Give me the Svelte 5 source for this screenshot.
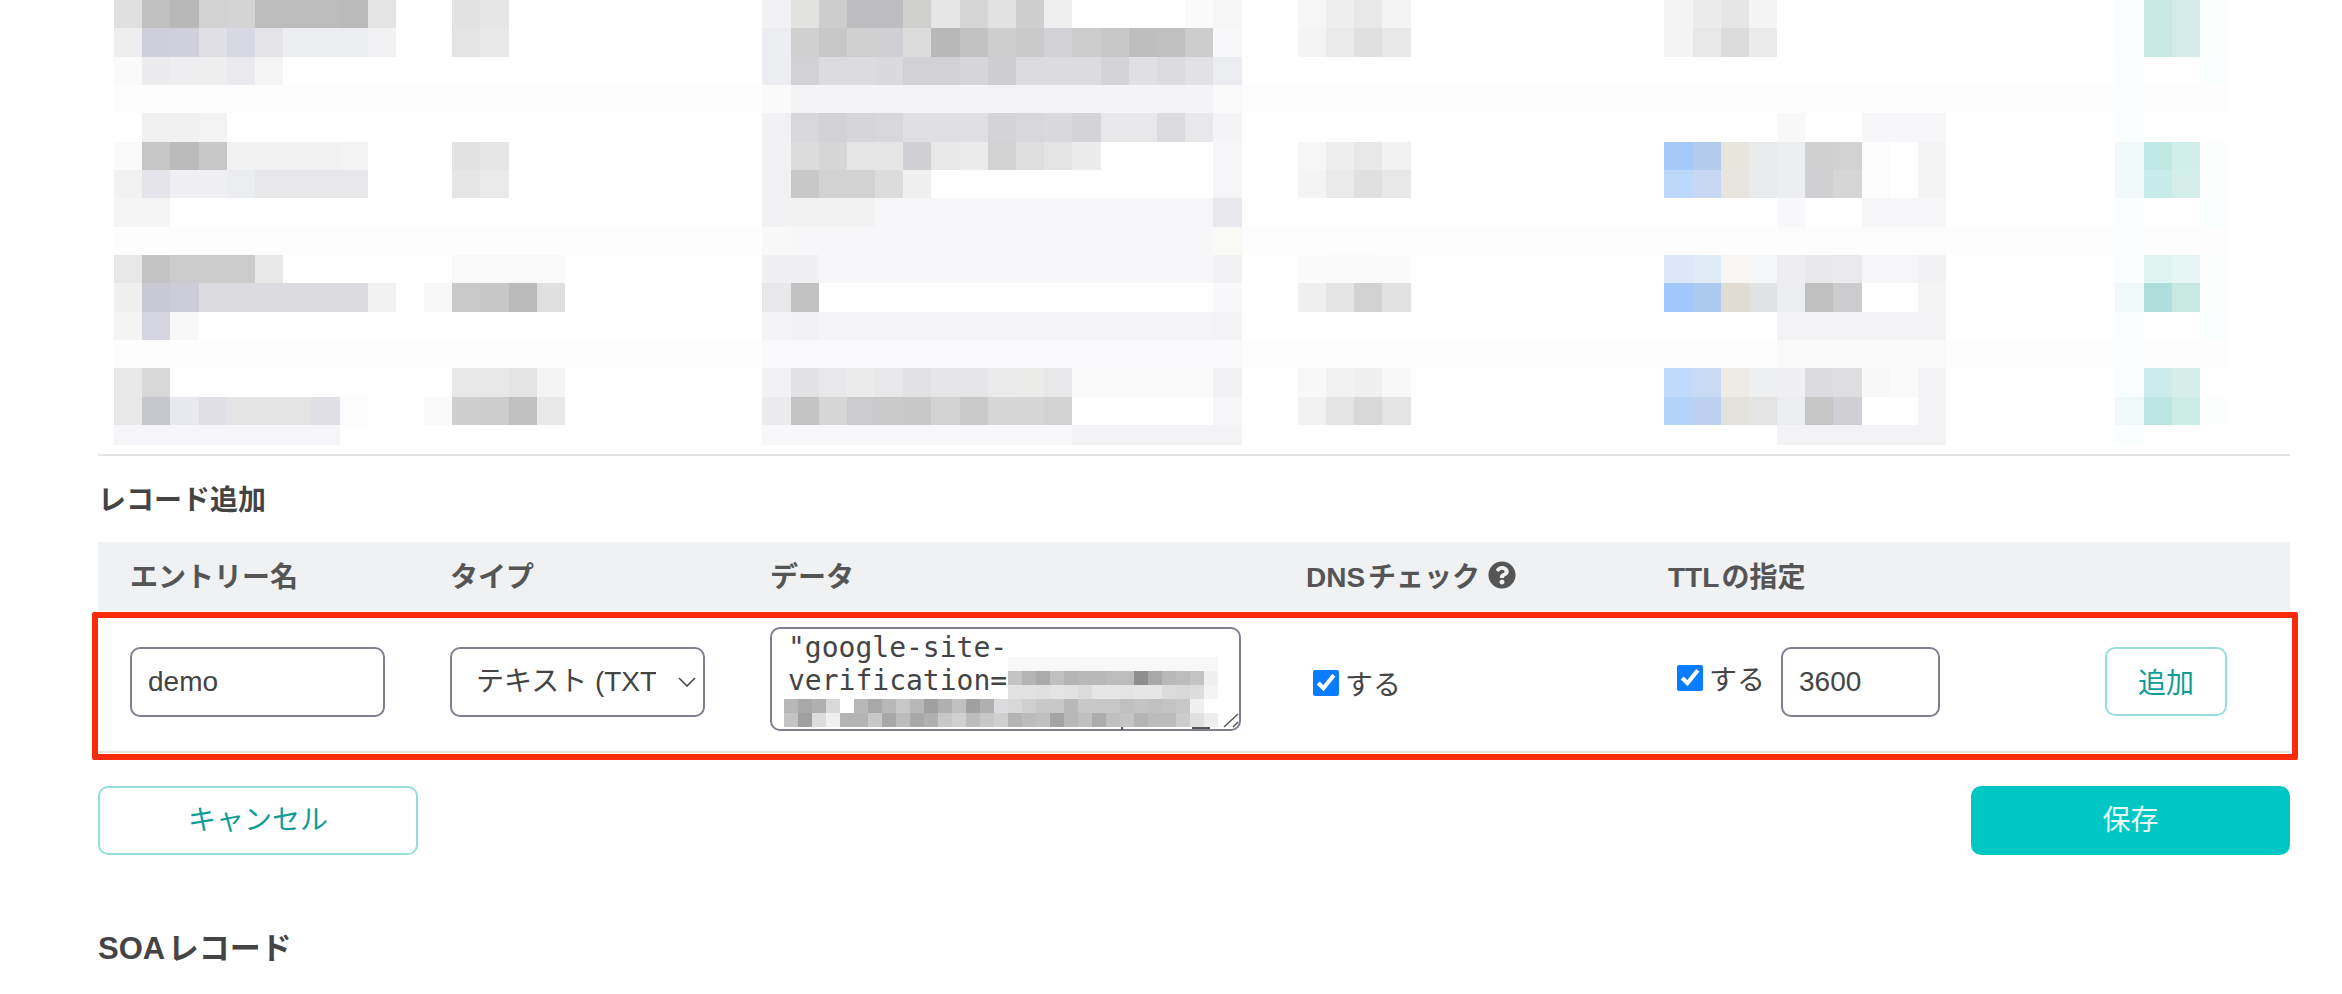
<script lang="ts">
	// Redacted table rows above the form, drawn as a mosaic: [row, first column, colours]
	// Colours are hex, two digits mean a grey, "*n" repeats
	const blur: [number, number, string][] = [
		[3, 0, 'fd*75'], [8, 0, 'fd*75'], [12, 0, 'fd*75'],
		// entry names
		[0, 0, 'e0 c0 b8 d2 d4 bc bc bc ba e4'],
		[1, 0, 'ee cfcfdb d0d0da e0e0e6 d8d8e2 e4e4e8 ecedf0 ecedf0 ecedf0 f2f2f4'],
		[2, 0, 'fa ececef eeeef0 ee eaeaee f5f5f6'],
		[4, 1, 'f1 f1 f3'],
		[5, 0, 'fa c6 bb c8 f2 f2 f2 f2 f3'],
		[6, 0, 'f2 e4e4ea f0f0f4 f0f0f4 ecedf0 e8e8ec e8e8ec e8e8ec e8e8ec'],
		[7, 0, 'f5 f5'],
		[9, 0, 'e8 c4 cb cb cb e8'],
		[10, 0, 'f0 c8c9d2 cdcdd8 dcdce0*6 f2'],
		[11, 0, 'f4 d6d6e0 f8'],
		[13, 0, 'e8 d8'],
		[14, 0, 'e8 c6c6ce e8e8f0 e0e0e6 e4 e4 e4 e0e0e6 fc'],
		[15, 0, 'f6f6fa*8'],
		// types
		[0, 12, 'e2 e6'], [1, 12, 'e4 e8'],
		[5, 12, 'e2 e6'], [6, 12, 'e6 ea'],
		[9, 12, 'f9*4'], [10, 11, 'f8 c9 c6 ba e0'],
		[13, 12, 'e8 e8 e4 f4'], [14, 11, 'fa cf cd c0 e8'],
		// data
		[0, 23, 'f2f2f5 e2e2e0 cd bdbdc0 bdbdc0 d0d0ce e6 d6 e2 cf ef ff ff ff ff fa f6'],
		[1, 23, 'ecedf0 d0 c8 d0 d0d0d4 dc b8 c2 ce ca d2d2d6 cd c8 be c0 cd f8f8fb'],
		[2, 23, 'ecedf0 d2d2d6 dcdce0 dcdce0 dadade d2d2d6 d2d2d6 d6d6da cfcfd2 dcdce0 dcdcdf dcdcdf d4d4d8 e0e0e4 dcdce0 e2e2e6 ecedf0'],
		[3, 23, 'fa f4f4f6*15 f9'],
		[4, 23, 'f2f2f5 d8d8dc d2d2d6 d6d6da d8d8dc e0e0e4 e0e0e4 e0e0e4 d4d4d8 d8d8dc dadade d4d4d8 e8e8ec e8e8ec dcdce0 e8e8ec f4f4f7'],
		[5, 23, 'f2f2f5 dc d6 e6 e6 d0d0d4 e8 ec d2 de e4 ec ff*4 f6f6f8'],
		[6, 23, 'f2f2f5 c8 d2 d2 dc f0 ff*10 f6f6f8'],
		[7, 23, 'f2f2f5 f2 f2 f2 f6f6f8*12 e8e8ee'],
		[8, 23, 'f8 f7f7f9*15 f9f9f6'],
		[9, 23, 'f0f0f3 f0f0f3 f7f7fa*14 f2f2f4'],
		[10, 23, 'e8e8ea c2 ff*14 f8f8fa'],
		[11, 23, 'f4f4f6 f2f2f4 f5f5f7*14 f3f3f5'],
		[12, 23, 'f9f9fb*17'],
		[13, 23, 'f2f2f4 e2e2e4 e8e8ea ec e8e8ea e2e2e4 e6e6e8 e6e6e8 ea ececea e8e8ea fa*5 f2f2f4'],
		[14, 23, 'ececee c4 d6 cbcbce ca c8 d2 ca d6 d6 d2 ff*5 f6f6f8'],
		[15, 23, 'f8f8fa*11 f3f3f5*6'],
		// dns check
		[0, 42, 'f6 ee e8 f4'], [1, 42, 'f4 ea e0 e8'],
		[5, 42, 'f6 ee e8 f2'], [6, 42, 'f4 ea e0 e8'],
		[9, 42, 'fb fa fa fb'], [10, 42, 'f0 e4 d2 e2'],
		[13, 42, 'f8 f2 f0 f8'], [14, 42, 'f2 e4 d8 e4'],
		// ttl
		[0, 55, 'f4 ec e6 f4'], [1, 55, 'f4 e8 dc ea'],
		[4, 59, 'f8'], [4, 62, 'f7f7f9*3'],
		[5, 55, 'a4c8f8 b4ccec e8e4de e8eaec eceef0 d0 d2 fc ff f4f4f5'],
		[6, 55, 'bcd8fa c8d8f4 e8e4e0 e8eaec eceef0 d0d0d2 d6 fc ff f4f4f5'],
		[7, 59, 'f8f8fa'], [7, 62, 'f7f7f9*3'],
		[8, 59, 'fc*6'],
		[9, 55, 'dce8fa e0ebf8 f8f6f2 f4f6f8 eeeef0 e8e8ea eaeaec f6f6f8 f6f6f8 f2f2f4'],
		[10, 55, 'a0c8fc accaf0 e0dcd4 e0e2e4 ecedee c0 cccccf ff ff f4f4f5'],
		[11, 59, 'f3f3f5*6'],
		[12, 59, 'f9f9fa*6'],
		[13, 55, 'c0dafc c8daf4 eeeae6 eeeff0 f0f0f2 dcdce0 dedee0 f8 fa f3f3f5'],
		[14, 55, 'b4d4fc bcd2f0 e4e2dc e4 ecedee c6 d0d0d4 ff ff f3f3f5'],
		[15, 59, 'f3f3f5*6'],
		// actions
		[0, 71, 'f9fdfd c8e8e6 d4ece9 fcfefe'], [1, 71, 'f9fdfd c8e8e6 d4ece9 fcfefe'],
		[2, 71, 'fbfefe'], [2, 74, 'fbfefe'], [3, 71, 'fbfefe'], [4, 71, 'fbfefe'],
		[5, 71, 'f0f9f8 c0e8e4 d2eeea fcfefe'], [6, 71, 'f2faf9 c8ecea d4eeea fcfefe'],
		[7, 71, 'fbfefe'], [7, 74, 'fbfefe'], [8, 71, 'fbfefe'],
		[9, 71, 'f9fdfd e0f4f2 e6f6f4 fcfefe'], [10, 71, 'f0f9f8 aedfdd c8e8e2 fcfefe'],
		[11, 71, 'fbfefe'], [11, 74, 'fbfefe'], [12, 71, 'fbfefe'],
		[13, 71, 'f9fdfd cbecea d4eeea'], [14, 71, 'f0f9f8 bce6e2 ccece6 fcfefe'],
		[15, 71, 'fbfefe']
	];

	// Redacted part of the textarea value
	const secret: [number, number, string][] = [
		[0, 16, 'f8*15'],
		[1, 16, 'c4 b4 aa c0 b4 b8 b8 bc bc 8e a8 b8 bc c4 f0'],
		[2, 16, 'e2 e2 e0 e4 e2 dc e6 e6 e4 e6 e6 dc d8 dc f4'],
		[3, 0, 'b8 a8 b0 d8 ff b8 a8 b8 c8 b8 a0 b0 c0 a0 b0 dcdce0 d8 d0 c8 c8 b8 c8 c8 c8 c0 c4 c0 c4 c8 f0'],
		[4, 0, 'c4 a0 dc f0 b4 b4 c8 a8 bc a8 b0 c8 d0 bc c8 d0 b4 bc c0 a4 b8 c0 ac c0 c4 b4 bc bc cc e0 ee']
	];

	function expand(rows: [number, number, string][]) {
		const cells: { row: number; col: number; color: string }[] = [];
		for (const [row, first, list] of rows) {
			let col = first;
			for (const item of list.split(' ')) {
				const [hex, times] = item.split('*');
				const color = hex.length === 2 ? `#${hex}${hex}${hex}` : `#${hex}`;
				for (let i = 0; i < Number(times ?? 1); i++) {
					cells.push({ row: row + 1, col: col + 1, color });
					col++;
				}
			}
		}
		return cells;
	}

	const blurCells = expand(blur);
	const secretCells = expand(secret);

	let entry = $state('demo');
	let type = $state('TXT');
	let data = $state('"google-site-\nverification=');
	let dnsCheck = $state(true);
	let ttlOn = $state(true);
	let ttl = $state('3600');
</script>

<div class="page">
	<div class="mosaic">
		{#each blurCells as c}
			<i style="grid-row:{c.row};grid-column:{c.col};background:{c.color}"></i>
		{/each}
	</div>

	<h3 class="add-title">レコード追加</h3>

	<div class="grid head">
		<div>エントリー名</div>
		<div>タイプ</div>
		<div>データ</div>
		<div class="with-help">
			DNS チェック
			<svg viewBox="0 0 512 512" width="28" height="28" aria-hidden="true">
				<path
					fill="#555"
					d="M504 256c0 136.997-111.043 248-248 248S8 392.997 8 256C8 119.083 119.043 8 256 8s248 111.083 248 248zM262.655 90c-54.497 0-89.255 22.957-116.549 63.758-3.536 5.286-2.353 12.415 2.715 16.258l34.699 26.31c5.205 3.947 12.621 3.008 16.665-2.122 17.864-22.658 30.113-35.797 57.303-35.797 20.429 0 45.698 13.148 45.698 32.958 0 14.976-12.363 22.667-32.534 33.976C247.128 238.528 216 254.941 216 296v4c0 6.627 5.373 12 12 12h56c6.627 0 12-5.373 12-12v-1.333c0-28.462 83.186-29.647 83.186-106.667 0-58.002-60.165-102-116.531-102zM256 338c-25.365 0-46 20.635-46 46 0 25.364 20.635 46 46 46s46-20.636 46-46c0-25.365-20.635-46-46-46z"
				/>
			</svg>
		</div>
		<div>TTL の指定</div>
		<div></div>
	</div>

	<div class="grid row">
		<div><input class="field entry" type="text" bind:value={entry} /></div>
		<div>
			<div class="select-wrap">
				<select class="field" bind:value={type}>
					<option value="A">A レコード</option>
					<option value="TXT">テキスト (TXT)</option>
				</select>
				<svg class="chevron" viewBox="0 0 18 10" width="18" height="10" aria-hidden="true">
					<path d="M1 1l8 8 8-8" fill="none" stroke="#444" stroke-width="1.6" />
				</svg>
			</div>
		</div>
		<div>
			<div class="data-wrap">
				<textarea class="field" bind:value={data}></textarea>
				<div class="secret">
					{#each secretCells as c}
						<i style="grid-row:{c.row};grid-column:{c.col};background:{c.color}"></i>
					{/each}
				</div>
				<span class="tick one"></span>
				<span class="tick two"></span>
				<svg class="grip" viewBox="0 0 18 18" width="18" height="18" aria-hidden="true">
					<path d="M2 16L16 3M11 16l5-5" fill="none" stroke="#555" stroke-width="1.5" />
				</svg>
			</div>
		</div>
		<div>
			<label class="check dns"><input type="checkbox" bind:checked={dnsCheck} />する</label>
		</div>
		<div class="ttl">
			<label class="check"><input type="checkbox" bind:checked={ttlOn} />する</label>
			<input class="field ttl-input" type="text" bind:value={ttl} />
		</div>
		<div><button class="btn add">追加</button></div>
		<div class="highlight"></div>
	</div>

	<div class="actions">
		<button class="btn cancel">キャンセル</button>
		<button class="btn save">保存</button>
	</div>

	<h3 class="soa-title">SOA レコード</h3>
</div>

<style>
	:global(body) {
		background: #fff;
		overflow: hidden;
	}

	.page {
		padding: 0 52px 0 98px;
		font-family: 'Liberation Sans', 'Noto Sans CJK JP', sans-serif;
		color: #444;
		font-size: 28px;
	}

	.mosaic {
		display: grid;
		grid-template-columns: repeat(75, 28.2px);
		grid-template-rows: repeat(15, 28.33px) 20px;
		padding-left: 16px;
		padding-bottom: 9px;
		border-bottom: 2px solid #e4e4e4;
	}

	.add-title {
		margin: 25px 0 21px;
		font-size: 28px;
		line-height: 40px;
		font-weight: 700;
	}

	.grid {
		display: grid;
		grid-template-columns: 320px 320px 536px 362px 437px 217px;
	}

	.grid > div {
		padding-left: 32px;
	}

	.head {
		box-sizing: border-box;
		height: 69px;
		padding-bottom: 3px;
		align-items: center;
		background: #f0f1f3;
		font-size: 28px;
		font-weight: 700;
		color: #555;
		word-spacing: -5px;
	}

	.with-help {
		display: flex;
		align-items: center;
		gap: 8px;
	}

	.row {
		position: relative;
		height: 138px;
		padding-top: 2px;
		align-items: center;
		border-bottom: 2px solid #e8e2dc;
	}

	.field {
		box-sizing: border-box;
		height: 70px;
		border: 2px solid #7f7f90;
		border-radius: 10px;
		background: #fff;
		color: #444;
		font-family: inherit;
		font-size: 28px;
		outline: none;
	}

	.entry {
		width: 255px;
		padding: 0 16px;
	}

	.select-wrap {
		position: relative;
		width: 255px;
	}

	select {
		appearance: none;
		width: 100%;
		padding: 0 47px 0 24px;
	}

	.chevron {
		position: absolute;
		top: 30px;
		right: 9px;
	}

	.data-wrap {
		position: relative;
		width: 471px;
		height: 104px;
		margin-top: -6px;
	}

	textarea {
		display: block;
		width: 471px;
		height: 104px !important;
		padding: 2px 16px 0;
		overflow: hidden;
		resize: none;
		font-family: 'DejaVu Sans Mono', monospace !important;
		font-size: 28px !important;
		line-height: 33px;
	}

	.secret {
		position: absolute;
		top: 30px;
		left: 14px;
		display: grid;
		grid-template-columns: repeat(31, 14px);
		grid-template-rows: repeat(5, 14px);
		pointer-events: none;
	}

	.tick {
		position: absolute;
		background: #555;
	}

	.tick.one {
		left: 351px;
		top: 100px;
		width: 2px;
		height: 3px;
	}

	.tick.two {
		left: 422px;
		top: 100px;
		width: 18px;
		height: 2px;
	}

	.grip {
		position: absolute;
		right: 1px;
		bottom: 2px;
		pointer-events: none;
	}

	.check {
		display: inline-flex;
		align-items: center;
		gap: 6px;
		font-size: 28px;
	}

	.check input {
		width: 26px;
		height: 26px;
		margin: 0;
		accent-color: #0a7cff;
	}

	.check.dns {
		margin: 3px 0 0 7px;
	}

	.ttl {
		display: flex;
		align-items: center;
		gap: 16px;
		padding-left: 41px !important;
	}

	.ttl .check {
		margin-top: -8px;
	}

	.ttl-input {
		width: 159px;
		flex: none;
		padding: 0 16px;
	}

	.btn {
		box-sizing: border-box;
		height: 69px;
		padding-bottom: 3px;
		border-radius: 10px;
		font-family: inherit;
		font-size: 28px;
		cursor: pointer;
	}

	.add,
	.cancel {
		border: 2px solid #96dedc;
		background: #fff;
		color: #129c98;
	}

	.add {
		width: 122px;
	}

	.actions .btn {
		padding-bottom: 5px;
	}

	.highlight {
		position: absolute;
		top: 1px;
		left: -6px;
		right: -8px;
		bottom: -9px;
		padding: 0 !important;
		border: 6px solid #f82c0a;
		border-radius: 2px;
		pointer-events: none;
	}

	.actions {
		display: flex;
		justify-content: space-between;
		margin-top: 33px;
	}

	.cancel {
		width: 320px;
	}

	.save {
		width: 319px;
		border: none;
		background: #00c7c4;
		color: #e6fafa;
	}

	.soa-title {
		margin: 74px 0 0;
		font-size: 31px;
		line-height: 40px;
		font-weight: 700;
		word-spacing: -5px;
	}
</style>
